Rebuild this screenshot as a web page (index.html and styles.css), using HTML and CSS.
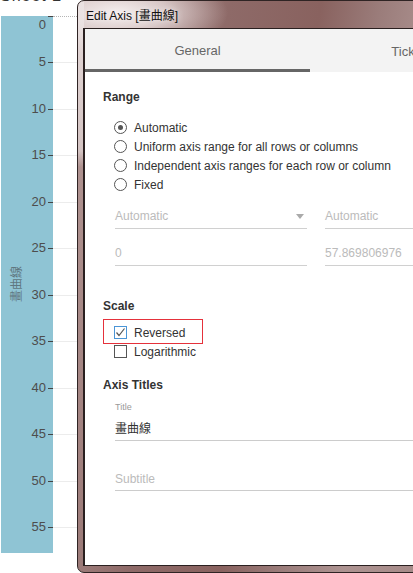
FILE: index.html
```html
<!DOCTYPE html>
<html lang="en">
<head>
<meta charset="utf-8">
<title>Edit Axis</title>
<link rel="stylesheet" href="styles.css">
</head>
<body>
<div class="page">
  <div class="sheet-title"><span>Sheet 2</span></div>
  <div class="chart">
    <div class="axis">
      <div class="axis-title"><span>畫曲線</span></div>
      <div class="ticks">
        <div class="tick first"><span class="tick-label">0</span><span class="tick-mark"></span></div>
        <div class="tick"><span class="tick-label">5</span><span class="tick-mark"></span></div>
        <div class="tick"><span class="tick-label">10</span><span class="tick-mark"></span></div>
        <div class="tick"><span class="tick-label">15</span><span class="tick-mark"></span></div>
        <div class="tick"><span class="tick-label">20</span><span class="tick-mark"></span></div>
        <div class="tick"><span class="tick-label">25</span><span class="tick-mark"></span></div>
        <div class="tick"><span class="tick-label">30</span><span class="tick-mark"></span></div>
        <div class="tick"><span class="tick-label">35</span><span class="tick-mark"></span></div>
        <div class="tick"><span class="tick-label">40</span><span class="tick-mark"></span></div>
        <div class="tick"><span class="tick-label">45</span><span class="tick-mark"></span></div>
        <div class="tick"><span class="tick-label">50</span><span class="tick-mark"></span></div>
        <div class="tick"><span class="tick-label">55</span><span class="tick-mark"></span></div>
      </div>
    </div>
    <div class="grid">
      <div class="gridline dotted"></div>
      <div class="gridline"></div>
      <div class="gridline"></div>
      <div class="gridline"></div>
      <div class="gridline"></div>
      <div class="gridline"></div>
      <div class="gridline"></div>
      <div class="gridline"></div>
      <div class="gridline"></div>
      <div class="gridline"></div>
      <div class="gridline"></div>
      <div class="gridline"></div>
    </div>
  </div>

  <div class="dialog">
    <div class="titlebar">Edit Axis [畫曲線]</div>
    <div class="window">
      <div class="tabs">
        <div class="tab active">General</div>
        <div class="tab">Tick Marks</div>
      </div>
      <div class="panel">
        <div class="section-title">Range</div>
        <div class="options">
          <div class="option"><span class="radio checked"></span>Automatic</div>
          <div class="option"><span class="radio"></span>Uniform axis range for all rows or columns</div>
          <div class="option"><span class="radio"></span>Independent axis ranges for each row or column</div>
          <div class="option"><span class="radio"></span>Fixed</div>
        </div>
        <div class="field-row">
          <div class="field select"><span>Automatic</span><span class="caret"></span></div>
          <div class="field"><span>Automatic</span></div>
        </div>
        <div class="field-row second">
          <div class="field"><span>0</span></div>
          <div class="field"><span>57.869806976</span></div>
        </div>

        <div class="section-title scale">Scale</div>
        <div class="options checks">
          <div class="option annotated">
            <span class="checkbox checked"><svg width="11" height="11" viewBox="0 0 11 11"><polyline points="1.5,5.5 4,8.5 9.5,1.5" fill="none" stroke="#555" stroke-width="1.2"/></svg></span>Reversed
            <span class="annotation"></span>
          </div>
          <div class="option"><span class="checkbox"></span>Logarithmic</div>
        </div>

        <div class="section-title titles">Axis Titles</div>
        <div class="text-field">
          <div class="tf-label">Title</div>
          <div class="tf-input">畫曲線</div>
        </div>
        <div class="text-field subtitle">
          <div class="tf-input placeholder">Subtitle</div>
        </div>
      </div>
    </div>
  </div>
</div>
</body>
</html>
```
FILE: styles.css
```css
html, body {
  margin: 0;
  padding: 0;
  width: 413px;
  height: 573px;
  overflow: hidden;
  background: #fff;
}

.page {
  position: relative;
  width: 413px;
  height: 573px;
  overflow: hidden;
  font-family: "Liberation Sans", Arial, "Noto Sans CJK TC", sans-serif;
  color: #333;
}

/* ---------- sheet title (cut off at top) ---------- */
.sheet-title {
  height: 5px;
  overflow: hidden;
}
.sheet-title span {
  display: block;
  margin-top: -12px;
  font-size: 16px;
  line-height: 16px;
  color: #333;
  letter-spacing: 1px;
}

/* ---------- chart axis ---------- */
.chart {
  display: flex;
  margin-top: 11px;
  height: 537px;
  overflow: hidden;
}
.axis {
  width: 52px;
  margin-left: 1px;
  background: #8fc4d4;
  display: flex;
  flex-shrink: 0;
}
.axis-title {
  width: 33px;
  display: flex;
  align-items: center;
  justify-content: center;
}
.axis-title span {
  writing-mode: vertical-rl;
  text-orientation: sideways;
  transform: rotate(180deg);
  font-size: 12px;
  line-height: 12px;
  color: #5f7780;
  font-family: "Noto Sans CJK TC", sans-serif;
}
.ticks {
  flex: 1;
  display: flex;
  flex-direction: column;
}
.tick {
  height: 46px;
  flex-shrink: 0;
  display: flex;
  justify-content: flex-end;
  align-items: flex-start;
}
.tick:nth-child(even) { height: 47px; }
.tick-label {
  font-size: 13px;
  line-height: 16px;
  margin-top: -8px;
  margin-right: 2px;
  color: #4d4d4d;
  white-space: nowrap;
}
.tick.first .tick-label { margin-top: 1px; }
.tick-mark {
  width: 5px;
  height: 1px;
  background: #444;
  flex-shrink: 0;
}

.grid {
  flex: 1;
  display: flex;
  flex-direction: column;
}
.gridline {
  height: 46px;
  flex-shrink: 0;
  box-sizing: border-box;
  border-top: 1px solid #ececec;
}
.gridline:nth-child(even) { height: 47px; }
.gridline.dotted { border-top: 1px dotted #b5b5b5; }

/* ---------- dialog window ---------- */
.dialog {
  position: absolute;
  left: 77px;
  top: 0;
  width: 440px;
  height: 573px;
  box-sizing: border-box;
  border: 1px solid #2f2424;
  border-radius: 7px 7px 0 7px;
  padding: 0 0 6px 5px;
  display: flex;
  flex-direction: column;
  background:
    linear-gradient(180deg, rgba(236,228,228,0.85) 0, rgba(236,228,228,0.6) 150px, rgba(236,228,228,0) 166px) 0 0 / 6px 100% no-repeat,
    radial-gradient(ellipse 110px 42px at 40px 12px, rgba(248,242,242,0.97) 0, rgba(240,230,230,0.7) 45%, rgba(240,230,230,0) 100%),
    linear-gradient(100deg, #b79c9a 0, #8e6a68 150px, #89625f 240px, #9b7d7b 300px, #ad9391 360px, #a68a88 440px);
}
.titlebar {
  height: 27px;
  flex-shrink: 0;
  display: flex;
  align-items: center;
  padding-left: 3px;
  font-size: 12px;
  color: #111;
  text-shadow: 0 0 6px rgba(255,255,255,0.8);
}
.window {
  flex: 1;
  border: 1px solid #2a2020;
  border-left-width: 2px;
  background: #fff;
  display: flex;
  flex-direction: column;
  overflow: hidden;
}

.tabs {
  height: 43px;
  flex-shrink: 0;
  display: flex;
  background: #f3f3f3;
}
.tab {
  flex: 0 0 225px;
  box-sizing: border-box;
  height: 43px;
  display: flex;
  align-items: center;
  justify-content: center;
  font-size: 13px;
  color: #666;
  padding-top: 2px;
}
.tab.active {
  border-bottom: 3px solid #666;
}

.panel {
  padding: 17px 0 0 18px;
  font-size: 12px;
}
.section-title {
  font-weight: bold;
  font-size: 12px;
  line-height: 16px;
  color: #333;
}
.section-title.scale { margin-top: 32px; }
.section-title.titles { margin-top: 16px; }

.options {
  margin-top: 13px;
  margin-left: 11px;
}
.options.checks { margin-top: 9px; }
.option {
  height: 19px;
  display: flex;
  align-items: center;
  color: #333;
  white-space: nowrap;
}
.annotated { position: relative; }
.annotation {
  position: absolute;
  left: -11px;
  top: -4px;
  width: 100px;
  height: 25px;
  box-sizing: border-box;
  border: 1px solid #e5313b;
}

.radio {
  width: 13px;
  height: 13px;
  box-sizing: border-box;
  border: 1px solid #555;
  border-radius: 50%;
  margin-right: 7px;
  display: flex;
  align-items: center;
  justify-content: center;
  flex-shrink: 0;
}
.radio.checked::after {
  content: "";
  width: 5px;
  height: 5px;
  border-radius: 50%;
  background: #555;
}
.checkbox {
  width: 13px;
  height: 13px;
  box-sizing: border-box;
  border: 1px solid #555;
  margin-right: 7px;
  display: flex;
  align-items: center;
  justify-content: center;
  flex-shrink: 0;
  background: #fff;
}
.checkbox.checked { border-color: #4b95d6; }

.field-row {
  display: flex;
  gap: 18px;
  margin-top: 11px;
  margin-left: 12px;
}
.field-row.second { margin-top: 13px; }
.field {
  width: 192px;
  height: 22px;
  flex-shrink: 0;
  border-bottom: 1px solid #d0d0d0;
  display: flex;
  align-items: center;
  justify-content: space-between;
  padding-bottom: 1px;
  box-sizing: content-box;
  color: #bbb;
  font-size: 12px;
}
.caret {
  width: 0;
  height: 0;
  border-left: 4px solid transparent;
  border-right: 4px solid transparent;
  border-top: 5px solid #aaa;
  margin-right: 3px;
}

.text-field {
  margin-left: 12px;
  width: 402px;
}
.tf-label {
  margin-top: 9px;
  font-size: 9px;
  line-height: 11px;
  color: #999;
}
.tf-input {
  padding: 8px 0 3px;
  font-size: 12px;
  line-height: 16px;
  color: #333;
  border-bottom: 1px solid #cccccc;
}
.text-field.subtitle { margin-top: 19px; }
.text-field.subtitle .tf-input { padding-top: 11px; }
.tf-input.placeholder { color: #bbb; }
```
